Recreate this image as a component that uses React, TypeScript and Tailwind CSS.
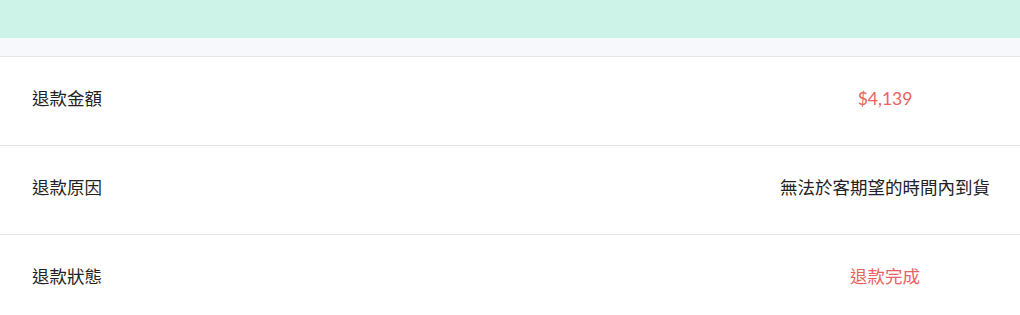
import React from 'react';

const rows = [
  { label: '退款金額', value: '$4,139', tone: 'red' },
  { label: '退款原因', value: '無法於客期望的時間內到貨', tone: 'dark' },
  { label: '退款狀態', value: '退款完成', tone: 'red' },
];

const App: React.FC = () => {
  return (
    <div className="w-[1020px] h-[315px] overflow-hidden bg-white font-['Lato','Noto_Sans_CJK_TC',sans-serif] text-[17.5px] text-[#222]">
      <div className="h-[38px] bg-[#cdf3e8]" />
      <div className="h-[19px] bg-[#f7f8fb] border-b border-[#e4e4e4]" />
      {rows.map((row) => (
        <div key={row.label} className="flex items-center justify-between h-[89px] pb-[4px] border-b border-[#e4e4e4] pl-8">
          <span>{row.label}</span>
          <span
            className={
              row.tone === 'red'
                ? 'w-[224px] mr-[23px] text-center whitespace-nowrap text-[#e8625f]'
                : 'w-[224px] mr-[23px] text-center whitespace-nowrap'
            }
          >
            {row.value}
          </span>
        </div>
      ))}
    </div>
  );
};

export default App;
